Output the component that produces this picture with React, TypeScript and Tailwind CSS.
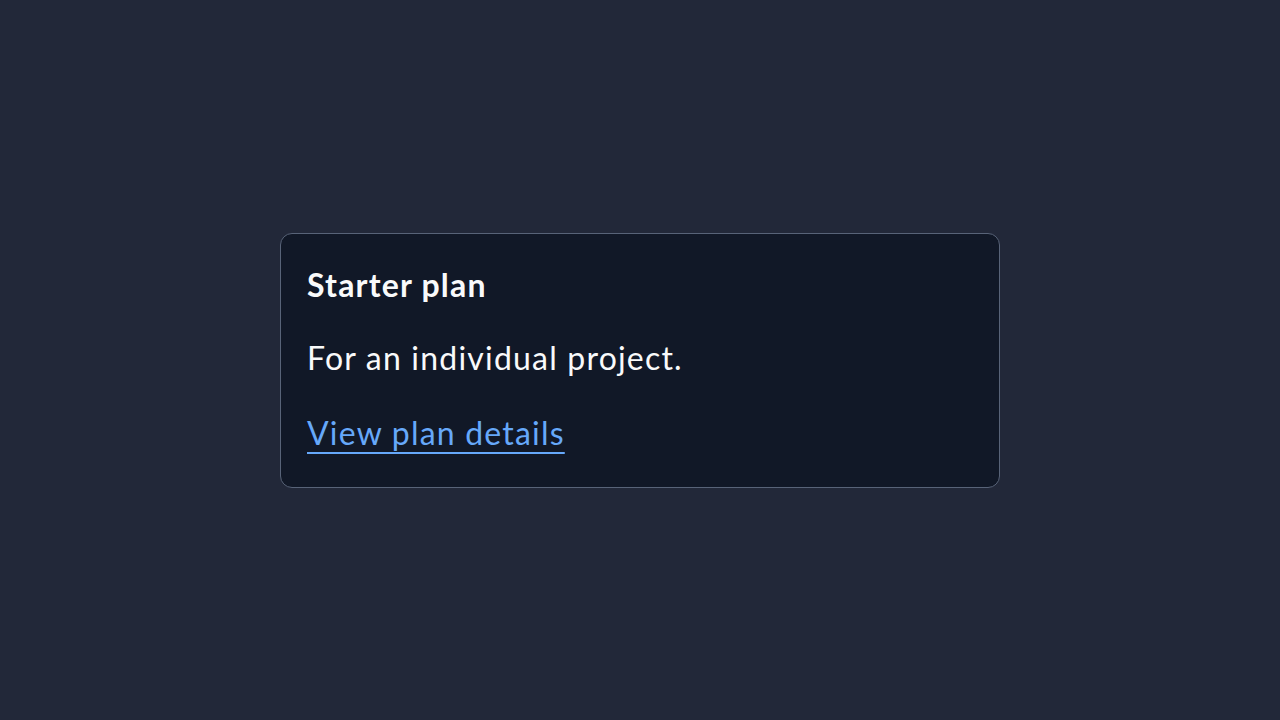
export default function App() {
  return (
    <div className="flex h-screen w-full items-center justify-center bg-[#222839]" style={{ fontFamily: 'Lato, "Noto Sans", sans-serif' }}>
      <div className="flex w-[720px] flex-col rounded-xl border border-[#586378] bg-[#111827] px-[26px] pt-[27px] pb-[30px] tracking-[1.2px]">
        <h2 className="text-[32px] leading-[48px] font-bold text-[#f9fafb]">Starter plan</h2>
        <p className="mt-[25px] text-[32px] leading-[48px] text-[#f9fafb]">For an individual project.</p>
        <a href="#" className="mt-[27px] self-start text-[32px] leading-[48px] text-[#66a8fa] underline underline-offset-[7px] decoration-2">View plan details</a>
      </div>
    </div>
  );
}
